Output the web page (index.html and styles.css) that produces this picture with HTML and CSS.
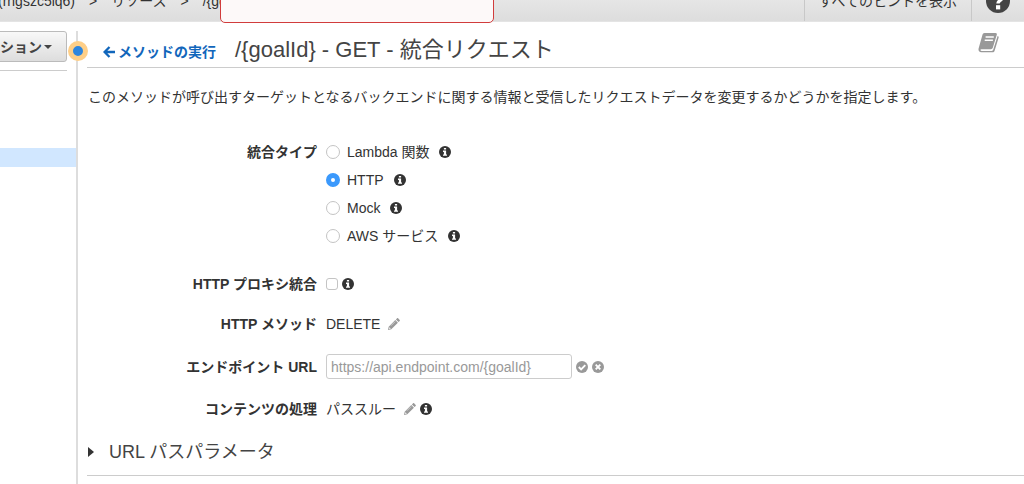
FILE: index.html
```html
<!DOCTYPE html>
<html lang="ja">
<head>
    <meta charset="UTF-8">
    <title>統合リクエスト</title>
    <link rel="stylesheet" href="styles.css">
</head>
<body>

<!-- Shared icons -->
<svg class="sprite" aria-hidden="true">
    <symbol id="info" viewBox="0 0 12 12">
        <circle cx="6" cy="6" r="6" fill="currentColor"/>
        <path d="M4.9 1.9h2.2v1.7H4.9zM4 4.6h3.1v3.8H8v1.3H4V8.4h.9V5.9H4z" fill="#fff"/>
    </symbol>
    <symbol id="pencil" viewBox="0 0 12 12">
        <path d="M9.1.3c.3-.3.7-.3 1 0l1.6 1.6c.3.3.3.7 0 1l-1.2 1.2-2.6-2.6zM7.3 2.1l2.6 2.6-6.6 6.6L0 12l.7-3.3z" fill="currentColor"/>
        <path d="M1.5 9.2l1.3 1.3-1.3.4-.4-.4z" fill="#fff"/>
        <path d="M3 7.700l4.200-4.200" stroke="#fff" stroke-width=".5"/>
    </symbol>
</svg>

<header class="topbar">
    <nav class="breadcrumb">
        <a href="#">(rngszc5lq6)</a>
        <span>&gt;</span>
        <a href="#">リソース</a>
        <span>&gt;</span>
        <a href="#">/{goalId}</a>
    </nav>
    <button type="button" class="hints">すべてのヒントを表示</button>
    <button type="button" class="help" aria-label="ヘルプ">
        <svg width="24" height="24" viewBox="0 0 24 24">
            <circle cx="12" cy="12" r="12" fill="#444"/>
            <path d="M8 9c0-5.2 8-5 8-.5 0 3-4 3-4 6" fill="none" stroke="#fff" stroke-width="3.4"/>
            <path d="M10 16.2h4.200v4.200H10z" fill="#fff"/>
        </svg>
    </button>
</header>
<div class="alert" role="alert"></div>

<div class="layout">
    <aside class="sidebar">
        <div class="actions">
            <button type="button" class="actions-button">アクション<span class="caret"></span></button>
        </div>
        <div class="selected-row"></div>
    </aside>
    <span class="resize-dot"></span>

    <main class="content">
        <div class="title-bar">
            <a href="#" class="back">
                <svg width="12" height="12" viewBox="0 0 12 12"><path d="M6.5 1L1.6 6l4.9 5M2 6h10" fill="none" stroke="currentColor" stroke-width="2.3"/></svg>
                メソッドの実行
            </a>
            <h1>/{goalId} - GET - 統合リクエスト</h1>
            <a href="#" class="docs" aria-label="ドキュメント">
                <svg width="22" height="20" viewBox="0 0 22 20">
                    <path d="M6.5 0h11c1.2 0 1.6.8 1.3 1.8l-4 13c-.3.9-1 1.4-2 1.4H3.4c-1 0-1.3.9-.7 1.4.2.2.5.3.9.3h10.2c.7 0 1.2-.4 1.4-1.1L19.6 2.9c1 .4 1.3 1 1 1.9l-4 12.9c-.3 1-1.1 1.6-2.1 1.6H3.4C1.2 19.3 0 17.4.6 15.5L4.4 2C4.7.8 5.4 0 6.500 0z" fill="#999"/>
                    <path d="M7.6 4h8.2M6.7 7.3h8.2" stroke="#fff" stroke-width="1.4"/>
                </svg>
            </a>
        </div>

        <p class="description">このメソッドが呼び出すターゲットとなるバックエンドに関する情報と受信したリクエストデータを変更するかどうかを指定します。</p>

        <form class="settings">
            <div class="row types" role="radiogroup" aria-labelledby="type-label">
                <span class="name" id="type-label">統合タイプ</span>
                <div class="options">
                    <div class="option">
                        <input type="radio" name="type" id="lambda"><label for="lambda">Lambda 関数</label>
                        <svg class="icon info"><use href="#info"/></svg>
                    </div>
                    <div class="option">
                        <input type="radio" name="type" id="http" checked><label for="http">HTTP</label>
                        <svg class="icon info"><use href="#info"/></svg>
                    </div>
                    <div class="option">
                        <input type="radio" name="type" id="mock"><label for="mock">Mock</label>
                        <svg class="icon info"><use href="#info"/></svg>
                    </div>
                    <div class="option">
                        <input type="radio" name="type" id="aws"><label for="aws">AWS サービス</label>
                        <svg class="icon info"><use href="#info"/></svg>
                    </div>
                </div>
            </div>
            <div class="row">
                <label class="name" for="proxy">HTTP プロキシ統合</label>
                <div class="value">
                    <input type="checkbox" id="proxy">
                    <svg class="icon info"><use href="#info"/></svg>
                </div>
            </div>
            <div class="row">
                <span class="name">HTTP メソッド</span>
                <div class="value">
                    <span>DELETE</span>
                    <button type="button" class="icon-button" aria-label="編集"><svg class="icon"><use href="#pencil"/></svg></button>
                </div>
            </div>
            <div class="row">
                <label class="name" for="endpoint">エンドポイント URL</label>
                <div class="value">
                    <input type="text" id="endpoint" placeholder="https://api.endpoint.com/{goalId}">
                    <button type="button" class="icon-button" aria-label="保存">
                        <svg class="icon" viewBox="0 0 12 12"><circle cx="6" cy="6" r="6" fill="currentColor"/><path d="M2.8 6l2.3 2.3 4.2-4.2" fill="none" stroke="#fff" stroke-width="1.9"/></svg>
                    </button>
                    <button type="button" class="icon-button" aria-label="キャンセル">
                        <svg class="icon" viewBox="0 0 12 12"><circle cx="6" cy="6" r="6" fill="currentColor"/><path d="M3.7 3.7l4.6 4.6M8.3 3.7L3.7 8.3" stroke="#fff" stroke-width="1.9"/></svg>
                    </button>
                </div>
            </div>
            <div class="row">
                <span class="name">コンテンツの処理</span>
                <div class="value">
                    <span>パススルー</span>
                    <button type="button" class="icon-button" aria-label="編集"><svg class="icon"><use href="#pencil"/></svg></button>
                    <svg class="icon info"><use href="#info"/></svg>
                </div>
            </div>
        </form>

        <h2 class="section"><button type="button" aria-expanded="false"><span class="arrow"></span>URL パスパラメータ</button></h2>
    </main>
</div>

</body>
</html>
```
FILE: styles.css
```css
* {
    box-sizing: border-box;
}
body {
    margin: 0;
    height: 100vh;
    overflow: hidden;
    display: flex;
    flex-direction: column;
    font-family: "Liberation Sans", "Noto Sans CJK JP", sans-serif;
    font-size: 14px;
    line-height: 20px;
    color: #333;
    background: #fff;
}
a {
    color: inherit;
    text-decoration: none;
}
button {
    font: inherit;
    color: inherit;
    border: none;
    background: none;
    padding: 0;
    cursor: pointer;
}
.sprite {
    display: none;
}

/* top bar, scrolled halfway out of the window */
.topbar {
    display: flex;
    flex: none;
    height: 42px;
    margin-top: -20px;
    background: linear-gradient(#eee, #ddd);
    border-bottom: 1px solid #e4e4e4;
}
.breadcrumb {
    flex: 1;
    display: flex;
    align-items: center;
    gap: 14px;
    margin-left: -2px;
}
.hints {
    padding: 0 14px;
    border-left: 1px solid #c8c8c8;
    border-right: 1px solid #c8c8c8;
}
.help {
    width: 52px;
    display: flex;
    align-items: center;
    justify-content: center;
}
.alert {
    position: absolute;
    top: -20px;
    left: 220px;
    width: 274px;
    height: 43px;
    background: #fdf9f9;
    border: 1px solid #d13c3c;
    border-radius: 5px;
}

.layout {
    flex: 1;
    display: flex;
    padding-top: 9px;
    position: relative;
}
.sidebar {
    flex: none;
    width: 78px;
    border-right: 2px solid #ddd;
    overflow: hidden;
}
.actions {
    display: flex;
    justify-content: flex-end;
    margin-right: 9px;
    padding-bottom: 8px;
    border-bottom: 1px solid #ccc;
}
.actions-button {
    flex: none;
    display: flex;
    align-items: center;
    height: 31px;
    padding: 0 14px;
    font-weight: bold;
    color: #444;
    background: linear-gradient(#f8f8f8, #ddd);
    border: 1px solid #bbb;
    border-radius: 3px;
}
.caret {
    margin-left: 2px;
    border: 4px solid transparent;
    border-top-color: #444;
    border-bottom: 0;
}
.selected-row {
    height: 19px;
    margin-top: 77px;
    background: #d1e7ff;
}
.resize-dot {
    position: absolute;
    top: 19px;
    left: 68px;
    width: 20px;
    height: 20px;
    border: 5px solid #ffcf87;
    border-radius: 50%;
    background: #2e86de;
}

.content {
    flex: 1;
    padding-left: 9px;
}
.title-bar {
    display: flex;
    height: 37px;
    padding: 2px 24px 0 16px;
    border-bottom: 1px solid #ccc;
}
.back {
    display: flex;
    align-items: center;
    gap: 3px;
    padding-top: 4px;
    font-weight: bold;
    color: #1166bb;
}
h1 {
    margin: 0 0 0 19px;
    font-size: 22px;
    line-height: 34px;
    font-weight: normal;
    color: #444;
}
.docs {
    margin-left: auto;
}
.description {
    margin: 19px 0 0 1px;
}

.settings {
    margin-top: 31px;
}
.row {
    display: grid;
    grid-template-columns: 230px 1fr;
    column-gap: 9px;
    align-items: center;
    margin-bottom: 20px;
}
.name {
    text-align: right;
    font-weight: bold;
}
.types {
    align-items: start;
    line-height: 28px;
    margin-bottom: 24px;
}
.option,
.value {
    display: flex;
    align-items: center;
}
.option {
    height: 28px;
}
.option label {
    margin: 0 10px 0 7px;
}
.icon {
    display: block;
    width: 12px;
    height: 12px;
}
.icon-button {
    color: #999;
}
.value {
    gap: 4px;
}
.value span {
    margin-right: 4px;
}
input[type="radio"],
input[type="checkbox"] {
    appearance: none;
    margin: 0;
    border: 1px solid #c4c4c4;
    background: #fff;
}
input[type="radio"] {
    width: 14px;
    height: 14px;
    border-radius: 50%;
}
input[type="radio"]:checked {
    border: 5px solid #3b99fc;
}
input[type="checkbox"] {
    width: 12px;
    height: 12px;
    border-radius: 3px;
}
input[type="text"] {
    width: 246px;
    height: 25px;
    padding: 0 4px;
    font: inherit;
    border: 1px solid #ccc;
    border-radius: 3px;
}
input::placeholder {
    color: #999;
}

.section {
    margin: 0;
    padding: 0 0 10px 1px;
    border-bottom: 1px solid #ccc;
    font-size: 18px;
    line-height: 26px;
    font-weight: normal;
    color: #444;
}
.section button {
    display: flex;
    align-items: center;
}
.arrow {
    margin-right: 15px;
    border: 5px solid transparent;
    border-left: 6px solid #333;
    border-right: 0;
}
```
